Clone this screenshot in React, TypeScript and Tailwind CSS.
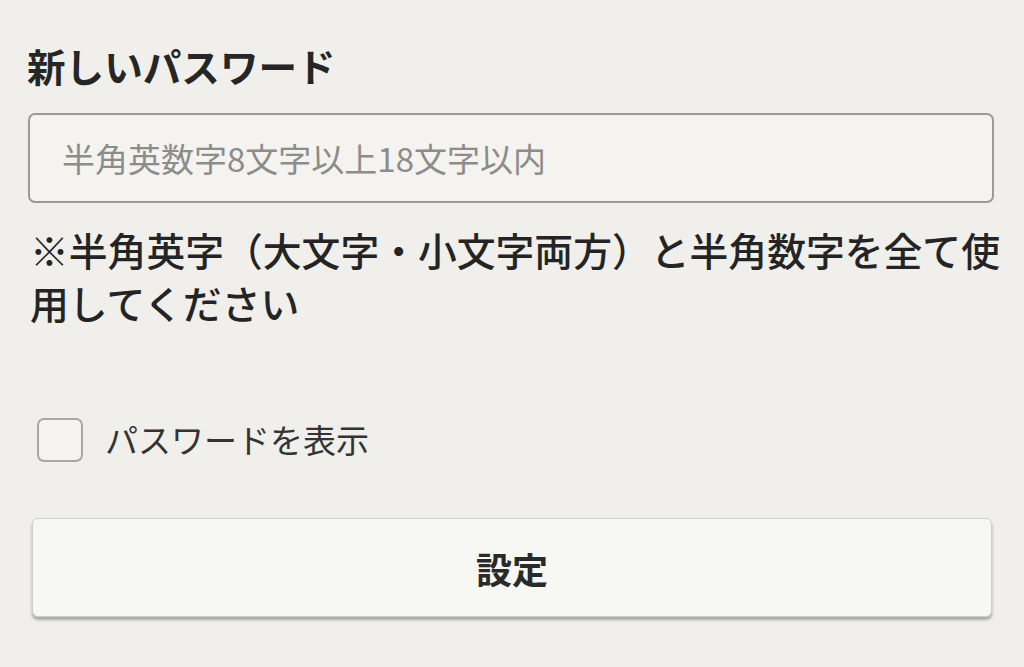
import React, { useState } from 'react';

const App: React.FC = () => {
  const [password, setPassword] = useState<string>('');
  const [showPassword, setShowPassword] = useState<boolean>(false);

  return (
    <div
      className="min-h-[667px] w-[1024px] bg-[#f0efeb] text-[#222] px-[28px] pt-[42px]"
      style={{ fontFamily: '"Noto Sans CJK JP", "Noto Sans", sans-serif' }}
    >
      <h1 className="text-[38.6px] font-bold leading-[46px] -ml-[1px] text-[#262626]">新しいパスワード</h1>

      <input
        type={showPassword ? 'text' : 'password'}
        value={password}
        onChange={e => setPassword(e.target.value)}
        placeholder="半角英数字8文字以上18文字以内"
        className="mt-[25px] block w-[966px] h-[90px] rounded-[7px] border-2 border-[#9a9a98] bg-[#f4f3f0] pl-[32px] text-[33px] text-[#333] placeholder:text-[#8c8c8a] outline-none"
      />

      <p className="mt-[20px] ml-[2px] w-[990px] text-[38.8px] leading-[53px] font-medium text-[#242424] whitespace-nowrap">
        ※半角英字（大文字・小文字両方）と半角数字を全て使
        <br />
        用してください
      </p>

      {/* show password toggle */}
      <label className="mt-[88px] ml-[9px] flex items-center gap-[22px] h-[45px] cursor-pointer">
        <input
          type="checkbox"
          checked={showPassword}
          onChange={() => setShowPassword(!showPassword)}
          className="appearance-none w-[46px] h-[44px] rounded-[7px] border-2 border-[#a8a8a6] bg-[#f4f3f0]"
        />
        <span className="text-[33px] text-[#333]">パスワードを表示</span>
      </label>

      <button
        type="button"
        className="mt-[56px] ml-[4px] block w-[960px] h-[99px] rounded-[6px] border border-[#cfcfcc] bg-[#f7f7f4] shadow-[0_3px_3px_rgba(0,0,0,0.3)] text-[36px] font-bold text-[#2a2a2a]"
      >
        設定
      </button>
    </div>
  );
};

export default App;
